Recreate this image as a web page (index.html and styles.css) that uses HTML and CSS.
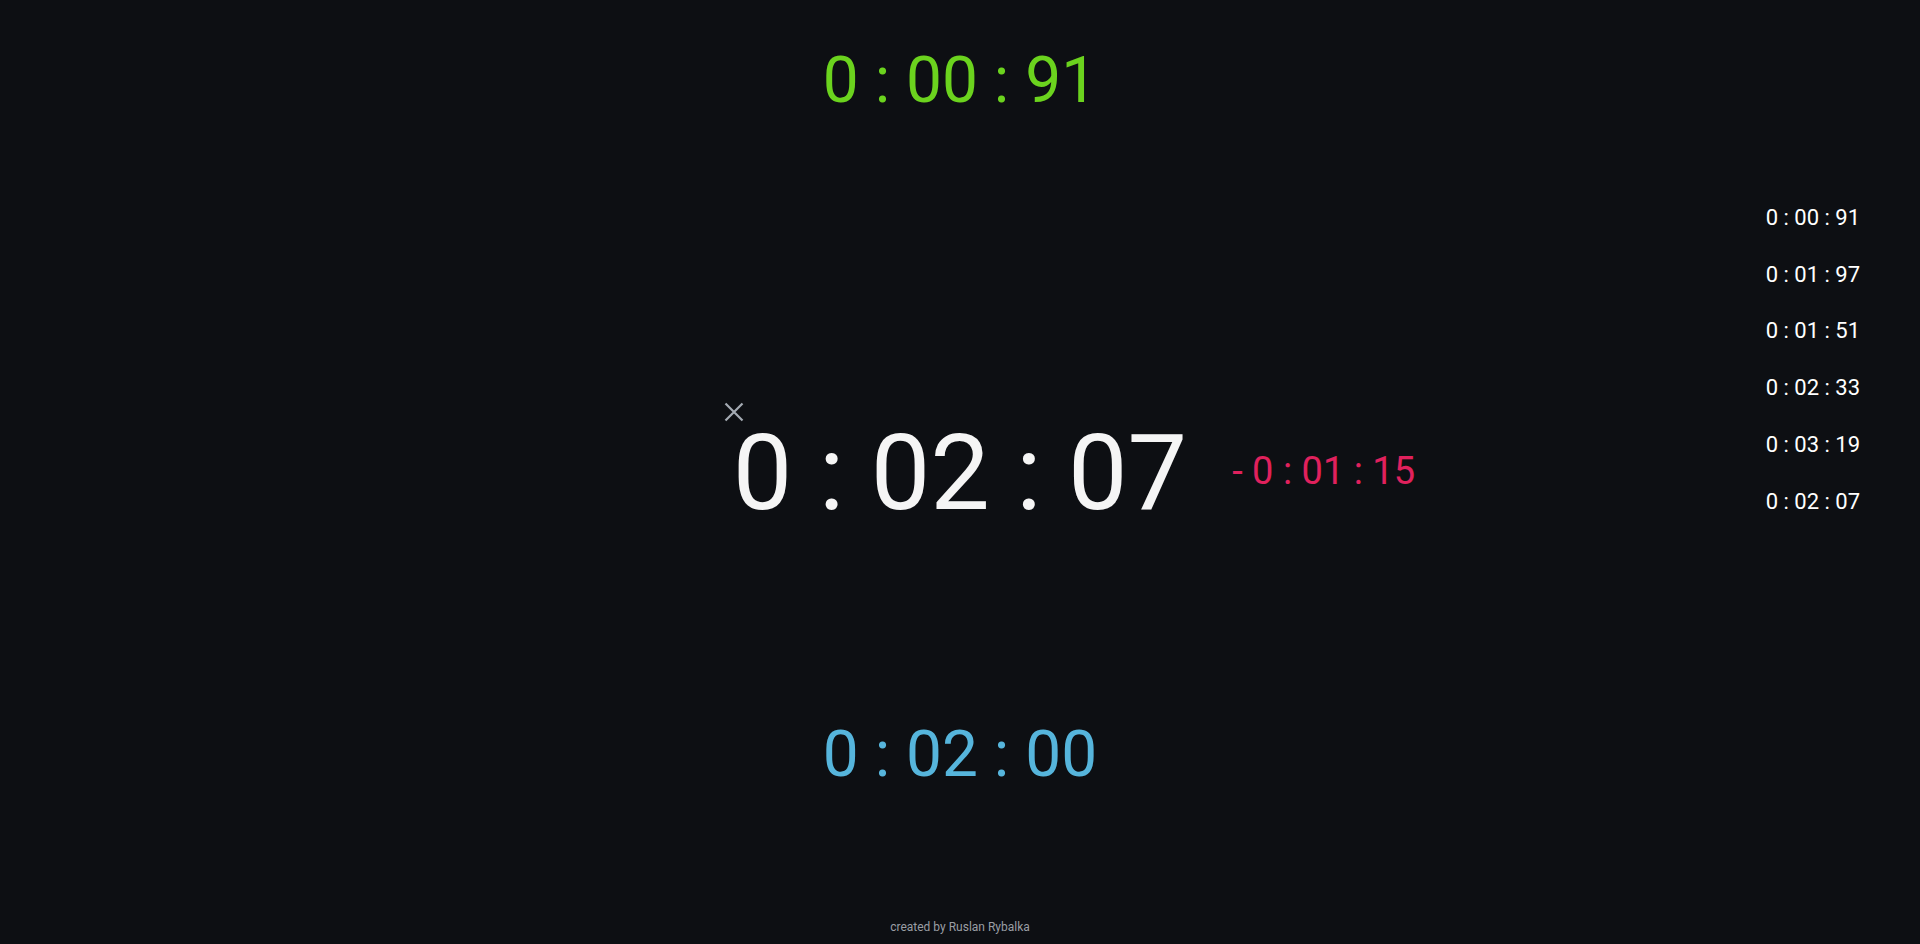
FILE: index.html
```html
<!DOCTYPE html>
<html lang="en">
<head>
<meta charset="utf-8">
<title>Stopwatch</title>
<link rel="stylesheet" href="styles.css">
</head>
<body>
<div class="page">
  <div class="side"></div>
  <main class="main">
    <div class="timer timer-best">0 : 00 : 91</div>
    <div class="current">
      <button class="close" aria-label="reset">
        <svg viewBox="0 0 22 22" width="22" height="22"><path d="M2.5 2.5 L19.5 19.5 M19.5 2.5 L2.5 19.5"/></svg>
      </button>
      <div class="timer timer-current">0 : 02 : 07</div>
      <div class="diff">- 0 : 01 : 15</div>
    </div>
    <div class="timer timer-target">0 : 02 : 00</div>
    <footer class="footer">created by Ruslan Rybalka</footer>
  </main>
  <aside class="side laps">
    <div class="lap">0 : 00 : 91</div>
    <div class="lap">0 : 01 : 97</div>
    <div class="lap">0 : 01 : 51</div>
    <div class="lap">0 : 02 : 33</div>
    <div class="lap">0 : 03 : 19</div>
    <div class="lap">0 : 02 : 07</div>
  </aside>
</div>
</body>
</html>
```

FILE: styles.css
```css
html, body {
  margin: 0;
  padding: 0;
  background: #0d0f13;
  height: 100%;
}
body {
  font-family: Roboto, "Liberation Sans", sans-serif;
  color: #f5f5f5;
  overflow: hidden;
}
.page {
  display: grid;
  grid-template-columns: 1fr auto 1fr;
  height: 944px;
}
.main {
  display: flex;
  flex-direction: column;
  align-items: center;
  padding-top: 43px;
}
.timer {
  line-height: normal;
  white-space: pre;
}
.timer-best {
  font-size: 64px;
  color: #6bd31e;
}
.current {
  position: relative;
  margin-top: 293px;
}
.timer-current {
  font-size: 106px;
  color: #f5f5f5;
}
.close {
  position: absolute;
  left: -10px;
  top: -10px;
  width: 22px;
  height: 22px;
  padding: 0;
  border: 0;
  background: none;
  display: flex;
}
.close svg {
  stroke: #a4abb3;
  stroke-width: 2.2;
  fill: none;
}
.diff {
  position: absolute;
  left: calc(100% + 45px);
  top: 38px;
  font-size: 38px;
  line-height: normal;
  white-space: pre;
  color: #e0215d;
}
.timer-target {
  margin-top: 182px;
  font-size: 64px;
  color: #56b5dc;
}
.footer {
  margin-top: 128px;
  font-size: 12px;
  line-height: 14px;
  color: #9a9ea4;
}
.laps {
  display: flex;
  flex-direction: column;
  align-items: flex-end;
  padding-top: 205px;
  padding-right: 60px;
  gap: 31px;
}
.lap {
  font-size: 22px;
  line-height: 25.7px;
  color: #ffffff;
  white-space: pre;
}
```
